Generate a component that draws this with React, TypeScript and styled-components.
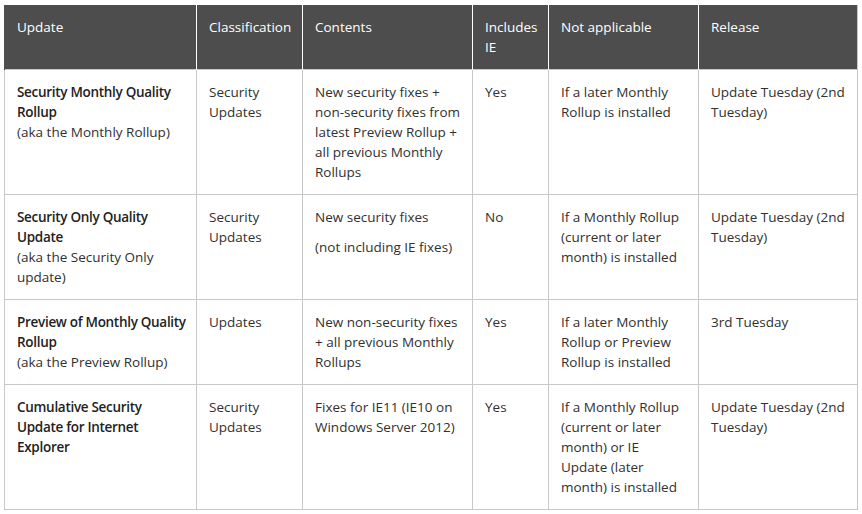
import React from "react";
import styled, { createGlobalStyle } from "styled-components";

const Global = createGlobalStyle`
  html, body { margin: 0; padding: 0; background: #ffffff; }
  body { font-family: "Open Sans", "Noto Sans", "Liberation Sans", sans-serif; }
  *, *::before, *::after { box-sizing: border-box; }
`;

const Page = styled.div`
  padding: 5px 5px 0 4px;
`;

const Table = styled.table`
  width: 853px;
  table-layout: fixed;
  border-collapse: collapse;
  font-size: 13.5px;
  line-height: 20px;
  color: #303030;
`;

const Col = styled.col<{ $w: number }>`
  width: ${(p) => p.$w}px;
`;

const HeadCell = styled.th`
  background: #4d4d4d;
  color: #ffffff;
  font-weight: 400;
  text-align: left;
  vertical-align: top;
  padding: 12px 10px 12px 12px;
  border-left: 1px solid #ffffff;
  &:first-child { border-left: 1px solid #4d4d4d; }
  &:last-child { border-right: 1px solid #c8c8c8; }
`;

const Cell = styled.td`
  vertical-align: top;
  padding: 12px 10px 12px 12px;
  border: 1px solid #c8c8c8;
`;

const Title = styled.strong`
  display: block;
  font-weight: 600;
  letter-spacing: -0.3px;
  color: #222222;
`;

const Para = styled.p<{ $gap?: boolean }>`
  margin: ${(p) => (p.$gap ? "10px 0 0" : "0")};
`;

const cols = [
  { name: "Update", w: 192 },
  { name: "Classification", w: 106 },
  { name: "Contents", w: 170 },
  { name: "Includes IE", w: 76 },
  { name: "Not applicable", w: 150 },
  { name: "Release", w: 159 },
];

type Row = {
  title: string;
  aka?: string;
  cls: string;
  contents: string[];
  ie: string;
  na: string;
  release: string;
};

const rows: Row[] = [
  {
    title: "Security Monthly Quality Rollup",
    aka: "(aka the Monthly Rollup)",
    cls: "Security Updates",
    contents: ["New security fixes + non-security fixes from latest Preview Rollup + all previous Monthly Rollups"],
    ie: "Yes",
    na: "If a later Monthly Rollup is installed",
    release: "Update Tuesday (2nd Tuesday)",
  },
  {
    title: "Security Only Quality Update",
    aka: "(aka the Security Only update)",
    cls: "Security Updates",
    contents: ["New security fixes", "(not including IE fixes)"],
    ie: "No",
    na: "If a Monthly Rollup (current or later month) is installed",
    release: "Update Tuesday (2nd Tuesday)",
  },
  {
    title: "Preview of Monthly Quality Rollup",
    aka: "(aka the Preview Rollup)",
    cls: "Updates",
    contents: ["New non-security fixes + all previous Monthly Rollups"],
    ie: "Yes",
    na: "If a later Monthly Rollup or Preview Rollup is installed",
    release: "3rd Tuesday",
  },
  {
    title: "Cumulative Security Update for Internet Explorer",
    cls: "Security Updates",
    contents: ["Fixes for IE11 (IE10 on Windows Server 2012)"],
    ie: "Yes",
    na: "If a Monthly Rollup (current or later month) or IE Update (later month) is installed",
    release: "Update Tuesday (2nd Tuesday)",
  },
];

export default function App() {
  return (
    <>
      <Global />
      <Page>
        <Table>
          <colgroup>
            {cols.map((c) => (
              <Col key={c.name} $w={c.w} />
            ))}
          </colgroup>
          <thead>
            <tr>
              {cols.map((c) => (
                <HeadCell key={c.name}>{c.name}</HeadCell>
              ))}
            </tr>
          </thead>
          <tbody>
            {rows.map((r) => (
              <tr key={r.title}>
                <Cell>
                  <Title>{r.title}</Title>
                  {r.aka && <span>{r.aka}</span>}
                </Cell>
                <Cell>{r.cls}</Cell>
                <Cell>
                  {r.contents.map((t, i) => (
                    <Para key={t} $gap={i > 0}>
                      {t}
                    </Para>
                  ))}
                </Cell>
                <Cell>{r.ie}</Cell>
                <Cell>{r.na}</Cell>
                <Cell>{r.release}</Cell>
              </tr>
            ))}
          </tbody>
        </Table>
      </Page>
    </>
  );
}
